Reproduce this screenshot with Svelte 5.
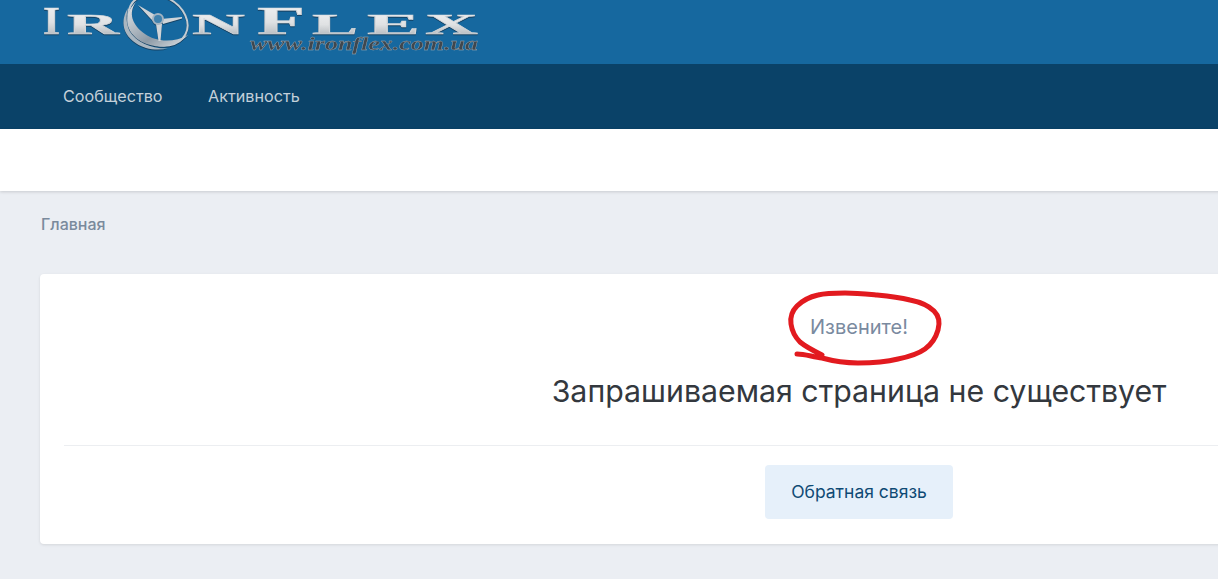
<script>
  const letters = [
    { t: 'I', x: 43, w: 17, big: true },
    { t: 'R', x: 67, w: 52, big: false },
    { t: 'N', x: 192, w: 53, big: false },
    { t: 'F', x: 257, w: 48, big: true },
    { t: 'L', x: 312, w: 46, big: false },
    { t: 'E', x: 367, w: 53, big: false },
    { t: 'X', x: 425, w: 53, big: false }
  ];
</script>

<div class="page">
  <header class="top">
    <svg class="logo" viewBox="0 0 500 64" width="500" height="64" aria-label="IronFlex">
      <defs>
        <linearGradient id="steel" x1="0" y1="0" x2="0" y2="1">
          <stop offset="0" stop-color="#f4f5f6" />
          <stop offset="0.55" stop-color="#dfe1e3" />
          <stop offset="1" stop-color="#a3aab0" />
        </linearGradient>
        <linearGradient id="ring" x1="0" y1="0" x2="1" y2="1">
          <stop offset="0" stop-color="#e6e9ec" />
          <stop offset="0.6" stop-color="#8d9aa6" />
          <stop offset="1" stop-color="#dfe3e6" />
        </linearGradient>
      </defs>
      <g class="soft">
        {#each letters as l}
          <text class="letter" class:big={l.big} x={l.x} y="33.5" textLength={l.w} lengthAdjust="spacingAndGlyphs">{l.t}</text>
        {/each}
        <ellipse cx="158" cy="20" rx="31" ry="24" class="wheel" transform="rotate(28 158 20)" />
        <path class="crescent" d="M136 2C123 14 124 32 142 42C158 50 176 47 188 35C174 43 156 42 145 34C132 25 128 13 136 2Z" />
        <path class="crescent thin" d="M128 8C118 24 125 41 146 48C153 50 161 50 168 48.500C151 49 136 42 129.500 31C126 23 126 15 128 8Z" />
        <path class="spoke" d="M138 5L155 15L160 20L155 23L150 18Z" />
        <path class="spoke" d="M161 19L182 17L182 18.500L163 24Z" />
        <path class="spoke" d="M156 24L162 24L160.500 41L158.500 41Z" />
        <circle cx="158" cy="19" r="5" class="hub" />
      </g>
      <text class="url" x="250" y="50" textLength="228" lengthAdjust="spacingAndGlyphs">www.ironflex.com.ua</text>
    </svg>
  </header>

  <nav class="nav">
    <a href="#community">Сообщество</a>
    <a href="#activity">Активность</a>
  </nav>

  <div class="subnav"></div>

  <main class="content">
    <div class="crumbs">Главная</div>
    <section class="card">
      <div class="message">
        <p class="sorry">Извените!</p>
        <h1>Запрашиваемая страница не существует</h1>
      </div>
      <div class="actions">
        <a class="btn" href="#contact">Обратная связь</a>
      </div>
    </section>
  </main>

  <svg class="scribble" width="1218" height="579" viewBox="0 0 1218 579" aria-hidden="true">
    <path d="M797 354C805 354 813 357 822 358C833 361 845 363 858 363C872 363 886 362 898 359C908 357 918 354 925 349C932 344 936 337 938 330C940 323 939 316 934 311C928 305 920 302 910 300C898 297 888 296 877 295C866 294 856 293 845 293C835 293 826 293 818 295C809 297 802 301 797 306C792 311 790 317 791 324C792 331 795 337 800 342C806 347 814 351 822 355" />
  </svg>
</div>

<style>
  :global(body) {
    margin: 0;
    background: #ebeef3;
    overflow: hidden;
  }
  .page {
    position: relative;
    width: 1718px;
    height: 579px;
    overflow: hidden;
    font-family: Inter, "Noto Sans", sans-serif;
  }
  .top {
    height: 64px;
    background: #16689f;
  }
  .logo {
    display: block;
  }
  .soft {
    filter: drop-shadow(0 1px 0.6px rgba(20, 40, 60, 0.6)) blur(0.3px);
  }
  .letter {
    font-family: "Liberation Serif", serif;
    font-weight: 700;
    font-size: 30px;
    fill: url(#steel);
    stroke: #d4d7da;
    stroke-width: 0.5;
  }
  .letter.big {
    font-size: 39px;
  }
  .wheel {
    fill: none;
    stroke: #c4ccd3;
    stroke-width: 2;
  }
  .crescent {
    fill: url(#ring);
  }
  .crescent.thin {
    fill: #aab6c0;
  }
  .spoke {
    fill: #cfd4d8;
  }
  .hub {
    fill: #3f81ad;
    stroke: #a3b4c2;
    stroke-width: 2;
  }
  .url {
    font-family: "Liberation Serif", serif;
    font-style: italic;
    font-weight: 700;
    font-size: 19px;
    fill: #3f474e;
    stroke: #a7adb2;
    stroke-width: 0.3;
    filter: blur(0.4px);
  }
  .nav {
    height: 65px;
    box-sizing: border-box;
    padding: 0 0 2px 63px;
    background: #0a4268;
    display: flex;
    align-items: center;
    gap: 45.5px;
  }
  .nav a {
    color: #c3d0da;
    font-size: 16.2px;
    text-decoration: none;
  }
  .subnav {
    height: 62px;
    background: #fff;
    box-shadow: 0 1px 3px rgba(0, 0, 0, 0.15);
    position: relative;
  }
  .content {
    padding: 0 40px;
  }
  .crumbs {
    height: 83px;
    box-sizing: border-box;
    padding: 24px 0 0 1px;
    font-size: 16px;
    line-height: 18px;
    font-weight: 500;
    color: #7a8a9c;
  }
  .card {
    background: #fff;
    border-radius: 4px;
    box-shadow: 0 1px 3px rgba(0, 0, 0, 0.1);
    height: 270px;
    padding: 0 24px;
    box-sizing: border-box;
    text-align: center;
  }
  .message {
    height: 172px;
    box-sizing: border-box;
    padding-top: 40px;
    border-bottom: 1px solid #eceef1;
  }
  .sorry {
    margin: 0;
    font-size: 20px;
    line-height: 26px;
    color: #7a8a9f;
  }
  h1 {
    margin: 33px 0 0;
    font-size: 30.3px;
    line-height: 36px;
    font-weight: 400;
    color: #33383e;
  }
  .actions {
    padding-top: 19px;
  }
  .btn {
    display: inline-block;
    width: 188px;
    height: 54px;
    line-height: 54px;
    border-radius: 4px;
    background: #e6f0fa;
    color: #0f4a74;
    font-size: 17.5px;
    text-decoration: none;
  }
  .scribble {
    position: absolute;
    left: 0;
    top: 0;
    pointer-events: none;
  }
  .scribble path {
    fill: none;
    stroke: #e21a1f;
    stroke-width: 5;
    stroke-linecap: round;
    stroke-linejoin: round;
  }
</style>
